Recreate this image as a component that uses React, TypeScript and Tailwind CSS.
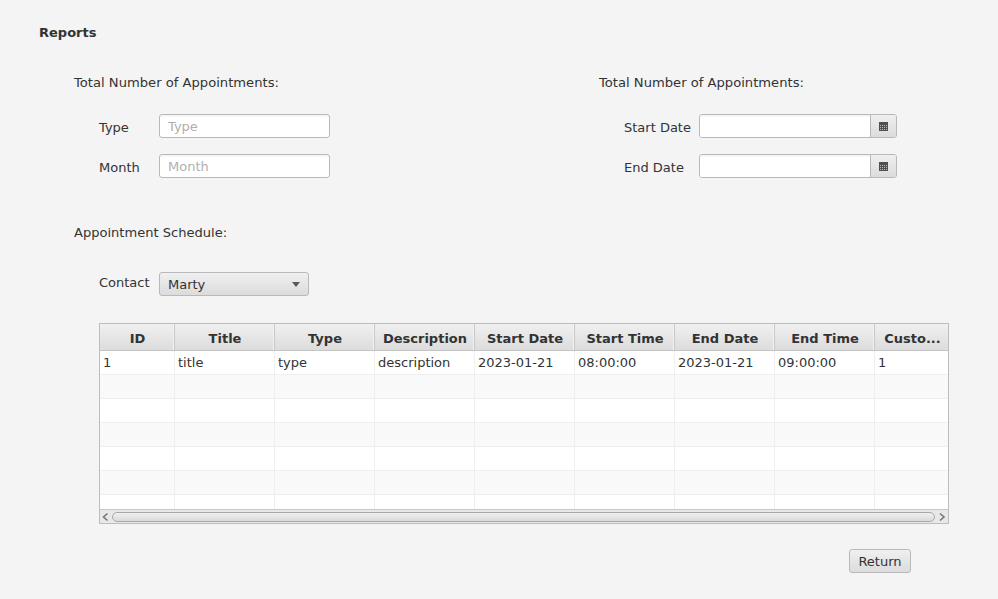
const columns = [
    { label: 'ID', width: 'w-[75px]' },
    { label: 'Title', width: 'w-[100px]' },
    { label: 'Type', width: 'w-[100px]' },
    { label: 'Description', width: 'w-[100px]' },
    { label: 'Start Date', width: 'w-[100px]' },
    { label: 'Start Time', width: 'w-[100px]' },
    { label: 'End Date', width: 'w-[100px]' },
    { label: 'End Time', width: 'w-[100px]' },
    { label: 'Custo...', width: 'w-[74px]' },
];

const firstRow = ['1', 'title', 'type', 'description', '2023-01-21', '08:00:00', '2023-01-21', '09:00:00', '1'];
const rowBackgrounds = ['bg-white', 'bg-[#f9f9f9]', 'bg-white', 'bg-[#f9f9f9]', 'bg-white', 'bg-[#f9f9f9]', 'bg-white'];

const TextBox = ({ placeholder }: { placeholder: string }) => (
    <div className="w-[171px] h-6 flex items-center pl-2 pt-px rounded-[3px] border border-[#b9b9b9] text-[#b0b0b0] bg-gradient-to-b from-[#f2f2f2] to-white to-[3px]">
        {placeholder}
    </div>
);

const CalendarIcon = () => (
    <svg width="9" height="9" viewBox="0 0 9 9" className="mr-px">
        <rect width="9" height="9" fill="#4f4f4f" />
        <path d="M1 3h1v1H1zM3 3h1v1H3zM5 3h1v1H5zM7 3h1v1H7zM1 5h1v1H1zM3 5h1v1H3zM5 5h1v1H5zM7 5h1v1H7zM1 7h1v1H1zM3 7h1v1H3zM5 7h1v1H5zM7 7h1v1H7z" fill="#b8b8b8" />
    </svg>
);

const DatePicker = () => (
    <div className="w-[198px] h-6 flex rounded-[3px] border border-[#b9b9b9] overflow-hidden">
        <div className="w-[171px] border-r border-[#b9b9b9] bg-gradient-to-b from-[#f2f2f2] to-white to-[3px]" />
        <div className="flex-1 flex items-center justify-center bg-gradient-to-b from-[#efefef] to-[#dcdcdc]">
            <CalendarIcon />
        </div>
    </div>
);

const App = () => {
    return (
        <div className="w-[998px] h-[599px] overflow-hidden bg-[#f4f4f4] text-[13px] text-[#333333] font-['DejaVu_Sans',sans-serif] pl-[39px] pt-[25px]">
            <h1 className="font-bold leading-4 h-4">Reports</h1>

            <div className="ml-[35px] mt-[34px] flex">
                <div className="w-[525px]">
                    <p className="leading-4 text-[13.13px]">Total Number of Appointments:</p>
                    <div className="ml-[25px] mt-[23px] grid grid-cols-[60px_171px] gap-y-4 items-center">
                        <span className="pt-1">Type</span>
                        <TextBox placeholder="Type" />
                        <span className="pt-1">Month</span>
                        <TextBox placeholder="Month" />
                    </div>
                </div>
                <div>
                    <p className="leading-4 text-[13.13px]">Total Number of Appointments:</p>
                    <div className="ml-[25px] mt-[23px] grid grid-cols-[75px_198px] gap-y-4 items-center">
                        <span className="pt-1">Start Date</span>
                        <DatePicker />
                        <span className="pt-1">End Date</span>
                        <DatePicker />
                    </div>
                </div>
            </div>

            <p className="ml-[35px] mt-[47px] leading-4 text-[13.06px]">Appointment Schedule:</p>

            <div className="ml-[60px] mt-[31px] flex items-center">
                <span className="w-[60px] -mt-[3px]">Contact</span>
                <div className="w-[150px] h-6 flex items-center justify-between pl-2 pr-2 rounded-[3px] border border-[#b9b9b9] bg-gradient-to-b from-[#f0f0f0] to-[#dcdcdc]">
                    <span className="pt-[2px]">Marty</span>
                    <span className="w-0 h-0 border-x-[4.5px] border-x-transparent border-t-[5px] border-t-[#5a5a5a]" />
                </div>
            </div>

            <div className="ml-[60px] mt-[27px] w-[850px] h-[201px] border border-[#bdbdbd] bg-white flex flex-col overflow-hidden">
                <div className="flex h-[27px] shrink-0 border-b border-[#c4c4c4] bg-gradient-to-b from-[#f0f0f0] to-[#dcdcdc] font-bold">
                    {columns.map((col) => (
                        <div key={col.label} className={`${col.width} shrink-0 flex items-center justify-center pl-px pt-[3px] border-r border-[#c8c8c8] shadow-[inset_-1px_0_0_#f2f2f2] last:border-r-0`}>
                            {col.label}
                        </div>
                    ))}
                </div>
                <div className="flex-1 overflow-hidden">
                    {rowBackgrounds.map((bg, rowIndex) => (
                        <div key={rowIndex} className={`flex h-6 border-b border-[#efefef] ${bg}`}>
                            {columns.map((col, colIndex) => (
                                <div key={col.label} className={`${col.width} shrink-0 flex items-center pl-[3px] border-r border-[#efefef] last:border-r-0`}>
                                    {rowIndex === 0 ? firstRow[colIndex] : ''}
                                </div>
                            ))}
                        </div>
                    ))}
                </div>
                <div className="h-[14px] shrink-0 flex items-center bg-[#e8e8e8] border-t border-[#c8c8c8]">
                    <svg width="12" height="12" viewBox="0 0 12 12" className="shrink-0">
                        <path d="M7.5 2.5 3.5 6l4 3.5" fill="none" stroke="#777777" strokeWidth="1.6" />
                    </svg>
                    <div className="flex-1 h-[10px] rounded-[5px] border border-[#a8a8a8] bg-gradient-to-b from-[#f0f0f0] to-[#dadada]" />
                    <svg width="13" height="12" viewBox="0 0 13 12" className="shrink-0">
                        <path d="M5 2.5 9 6l-4 3.5" fill="none" stroke="#777777" strokeWidth="1.6" />
                    </svg>
                </div>
            </div>

            <div className="ml-[810px] mt-[25px] w-[62px] h-6 flex items-center justify-center pt-[2px] rounded-[3px] border border-[#b9b9b9] bg-gradient-to-b from-[#f0f0f0] to-[#dcdcdc]">
                Return
            </div>
        </div>
    );
};

export default App;
